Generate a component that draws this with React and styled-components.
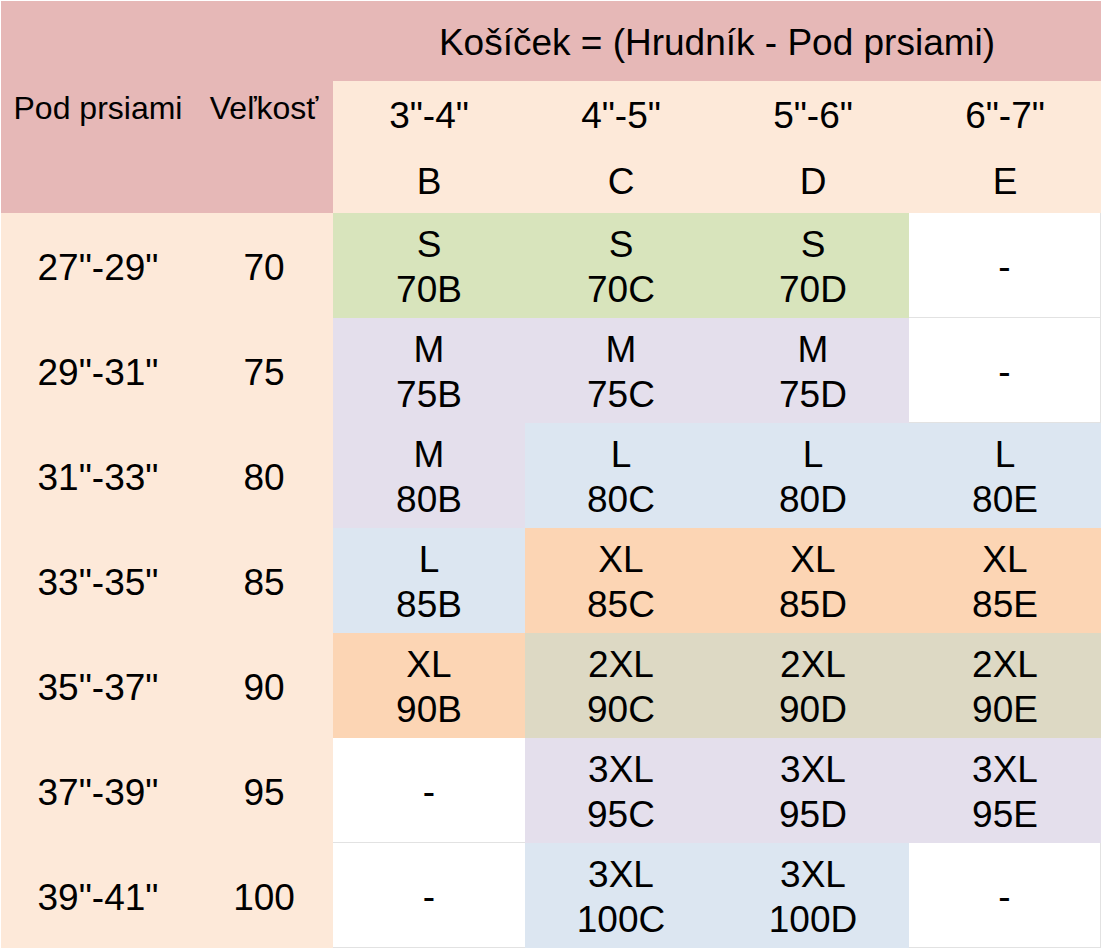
import React from 'react';
import styled, { createGlobalStyle } from 'styled-components';

const GlobalStyle = createGlobalStyle`
  html, body {
    margin: 0;
    padding: 0;
    background: #ffffff;
  }
  body {
    font-family: "Liberation Sans", Arial, sans-serif;
    color: #000000;
  }
`;

const COLORS = {
  pink: '#e6b8b7',
  peach: '#fde9d9',
  green: '#d8e4bc',
  lavender: '#e4dfec',
  blue: '#dce6f1',
  orange: '#fcd5b4',
  khaki: '#ddd9c4',
  white: '#ffffff'
};

const cups = [
  { range: '3"-4"', letter: 'B' },
  { range: '4"-5"', letter: 'C' },
  { range: '5"-6"', letter: 'D' },
  { range: '6"-7"', letter: 'E' }
];

// each cell: [size, code, colour] or null for an empty "-" cell
const rows = [
  { under: '27"-29"', band: '70', cells: [['S', '70B', 'green'], ['S', '70C', 'green'], ['S', '70D', 'green'], null] },
  { under: '29"-31"', band: '75', cells: [['M', '75B', 'lavender'], ['M', '75C', 'lavender'], ['M', '75D', 'lavender'], null] },
  { under: '31"-33"', band: '80', cells: [['M', '80B', 'lavender'], ['L', '80C', 'blue'], ['L', '80D', 'blue'], ['L', '80E', 'blue']] },
  { under: '33"-35"', band: '85', cells: [['L', '85B', 'blue'], ['XL', '85C', 'orange'], ['XL', '85D', 'orange'], ['XL', '85E', 'orange']] },
  { under: '35"-37"', band: '90', cells: [['XL', '90B', 'orange'], ['2XL', '90C', 'khaki'], ['2XL', '90D', 'khaki'], ['2XL', '90E', 'khaki']] },
  { under: '37"-39"', band: '95', cells: [null, ['3XL', '95C', 'lavender'], ['3XL', '95D', 'lavender'], ['3XL', '95E', 'lavender']] },
  { under: '39"-41"', band: '100', cells: [null, ['3XL', '100C', 'blue'], ['3XL', '100D', 'blue'], null] }
];

const Page = styled.div`
  padding: 1px 0 0 1px;
`;

const Table = styled.div`
  display: grid;
  grid-template-columns: 194px 138px repeat(4, 192px);
  grid-template-rows: 80px 66px 66px repeat(7, 105px);
  width: 1100px;
`;

const Cell = styled.div`
  box-sizing: border-box;
  display: flex;
  flex-direction: column;
  align-items: center;
  justify-content: center;
  text-align: center;
  padding-top: 3px;
  background: ${(p) => COLORS[p.$tone] || COLORS.white};
  font-size: ${(p) => (p.$small ? '32px' : '37px')};
  line-height: 45px;
  white-space: nowrap;
  grid-column: ${(p) => p.$col || 'auto'};
  grid-row: ${(p) => p.$row || 'auto'};
  border-bottom: ${(p) => (p.$tone === 'white' ? '1px solid #e2e2e2' : 'none')};
  border-right: ${(p) => (p.$tone === 'white' && p.$edge ? '1px solid #e2e2e2' : 'none')};
`;

const SizeLine = styled.span`
  display: block;
`;

const App = () => {
  return (
    <Page>
      <GlobalStyle />
      <Table>
        <Cell $tone="pink" $small $col="1" $row="1 / 4">Pod prsiami</Cell>
        <Cell $tone="pink" $small $col="2" $row="1 / 4">Veľkosť</Cell>
        <Cell $tone="pink" $col="3 / 7" $row="1">
          Košíček = (Hrudník - Pod prsiami)
        </Cell>
        {cups.map((c) => (
          <Cell key={c.range} $tone="peach" $row="2">{c.range}</Cell>
        ))}
        {cups.map((c) => (
          <Cell key={c.letter} $tone="peach" $row="3">{c.letter}</Cell>
        ))}
        {rows.map((r) => (
          <React.Fragment key={r.band}>
            <Cell $tone="peach">{r.under}</Cell>
            <Cell $tone="peach">{r.band}</Cell>
            {r.cells.map((c, i) =>
              c ? (
                <Cell key={i} $tone={c[2]}>
                  <SizeLine>{c[0]}</SizeLine>
                  <SizeLine>{c[1]}</SizeLine>
                </Cell>
              ) : (
                <Cell key={i} $tone="white" $edge={i === 3}>-</Cell>
              )
            )}
          </React.Fragment>
        ))}
      </Table>
    </Page>
  );
};

export default App;
